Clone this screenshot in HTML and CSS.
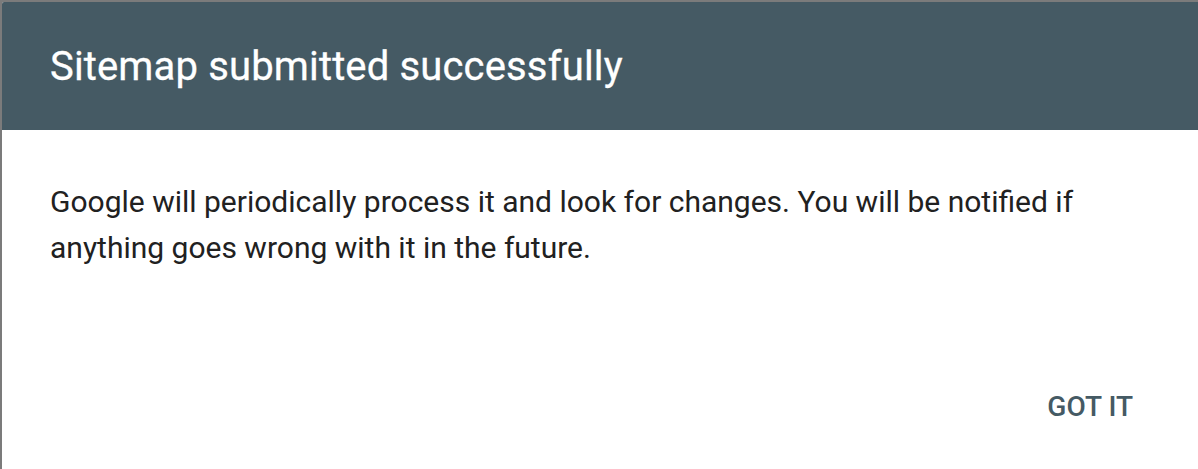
FILE: index.html
```html
<!DOCTYPE html>
<html lang="en">
<head>
<meta charset="utf-8">
<title>Sitemap submitted successfully</title>
<link rel="stylesheet" href="styles.css">
</head>
<body>
<div class="dialog">
  <div class="dialog-header">
    <h1 class="dialog-title">Sitemap submitted successfully</h1>
  </div>
  <div class="dialog-content">
    <p class="dialog-text">Google will periodically process it and look for changes. You will be notified if anything goes wrong with it in the future.</p>
  </div>
  <div class="dialog-actions">
    <button class="btn-text" type="button">GOT IT</button>
  </div>
</div>
</body>
</html>
```

FILE: styles.css
```css
html, body {
  margin: 0;
  padding: 0;
  height: 100%;
}
body {
  background: #7b7b7b;
  font-family: Roboto, "Noto Sans", Arial, sans-serif;
  padding: 2px 0 0 2px;
  box-sizing: border-box;
  overflow: hidden;
}
.dialog {
  background: #ffffff;
  height: 100%;
  border-top-left-radius: 2px;
  overflow: hidden;
  display: flex;
  flex-direction: column;
}
.dialog-header {
  background: #455a64;
  height: 128px;
  display: flex;
  align-items: center;
  padding-left: 48px;
}
.dialog-title {
  margin: 0;
  color: #ffffff;
  font-size: 40px;
  font-weight: 400;
  letter-spacing: 0.15px;
  -webkit-text-stroke: 0.3px #ffffff;
}
.dialog-content {
  padding: 49px 48px 0 48px;
}
.dialog-text {
  margin: 0;
  color: #212121;
  font-size: 30px;
  line-height: 46px;
}
.dialog-actions {
  display: flex;
  justify-content: flex-end;
  padding: 111px 49px 0 0;
}
.btn-text {
  background: none;
  border: none;
  font-family: Roboto, "Noto Sans", Arial, sans-serif;
  font-size: 28px;
  font-weight: 500;
  color: #455a64;
  padding: 8px 16px;
  letter-spacing: 0;
  cursor: pointer;
}
```
